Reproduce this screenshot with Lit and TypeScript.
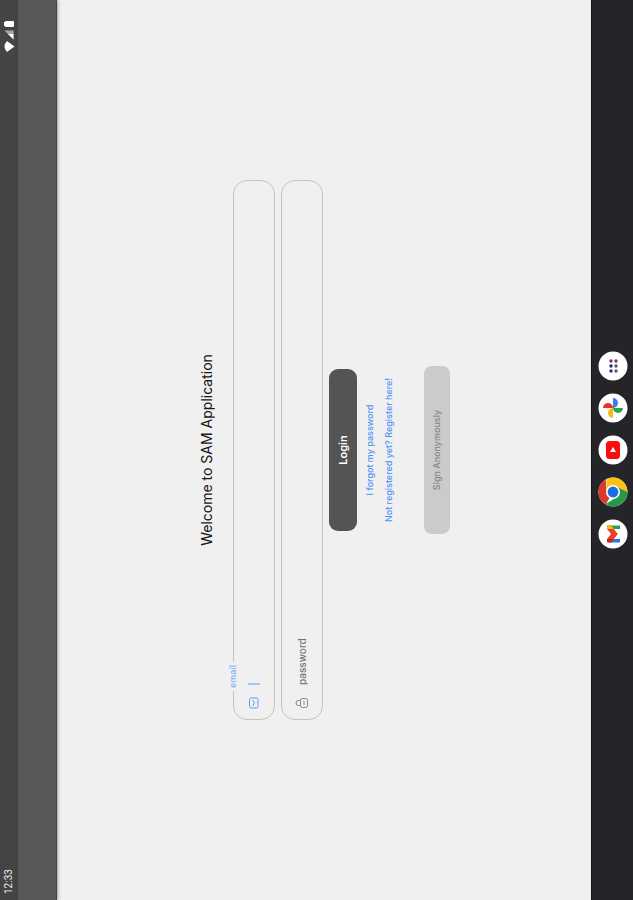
import { LitElement, html, css, svg } from "lit";
import { customElement } from "lit/decorators.js";

const photos = svg`
  <path d="M15 5A5 5 0 0 1 15 15Z" fill="#ea3325"/>
  <path d="M25 15A5 5 0 0 1 15 15Z" fill="#3b7ded"/>
  <path d="M15 25A5 5 0 0 1 15 15Z" fill="#28a446"/>
  <path d="M5 15A5 5 0 0 1 15 15Z" fill="#fbb917"/>`;

const gmail = svg`
  <path d="M8.300 12V22" stroke="#2a74e8" stroke-width="3.400"/>
  <path d="M21.700 12V22" stroke="#2ba04a" stroke-width="3.400"/>
  <path d="M6.600 9L10 9L15 13L20 9L23.400 9V13.200L15 19.800L6.600 13.200Z" fill="#e8402f"/>
  <path d="M20 9.200Q23.400 8 23.400 12V13.200L20 15.900Z" fill="#fbbc04"/>
  <path d="M10 9.200Q6.600 8 6.600 12V13.200L10 15.900Z" fill="#c5221f"/>`;

const chrome = svg`
  <path d="M15 15L2.440 7.750A14.500 14.500 0 0 1 27.560 7.750L15 8.500Z" fill="#dc3b2c"/>
  <path d="M15 8.500H27.900A14.500 14.500 0 0 1 15 29.500L20.600 18.250Z" fill="#fbc116"/>
  <path d="M9.400 18.250L2.700 7.300A14.500 14.500 0 0 0 15 29.500L20.600 18.250Z" fill="#279847"/>
  <circle cx="15" cy="15" r="7" fill="#fff"/>
  <circle cx="15" cy="15" r="5.400" fill="#1f6be0"/>`;

const youtube = svg`
  <rect x="6" y="8" width="18" height="14" rx="3.500" fill="#fb0d0d"/>
  <path d="M13 12L18 15L13 18Z" fill="#fff"/>`;

const drawer = svg`${[10, 15, 20].map((x) =>
  [13, 18].map(
    (y) => svg`<circle cx=${x} cy=${y} r="1.700" fill=${x === 20 ? "#7a3560" : y === 13 ? "#2b2a78" : "#4d5a78"} />`
  )
)}`;

const apps = [
  { name: "Gmail", art: gmail },
  { name: "Chrome", art: chrome },
  { name: "YouTube", art: youtube },
  { name: "Photos", art: photos },
  { name: "All apps", art: drawer },
];

@customElement("app-root")
export class AppRoot extends LitElement {
  static styles = css`
    :host {
      display: block;
      width: 100%;
      height: 100vh;
      overflow: hidden;
      font-family: Inter, "Open Sans", sans-serif;
    }
    * {
      box-sizing: border-box;
    }
    /* A landscape tablet turned a quarter to the left */
    .tablet {
      width: 100vh;
      height: 100vw;
      transform-origin: top left;
      transform: translateY(100vh) rotate(-90deg);
      display: flex;
      flex-direction: column;
      background: #f0f0f0;
    }
    .status {
      height: 18px;
      flex: none;
      display: flex;
      align-items: center;
      justify-content: space-between;
      padding: 0 18px 0 6px;
      background: #444;
      color: #eee;
      font: 10px/18px Roboto, sans-serif;
    }
    .status svg {
      display: block;
    }
    .appbar {
      height: 39px;
      flex: none;
      background: #585858;
      border-bottom: 1px solid #444;
      box-shadow: 0 1px 3px rgba(0, 0, 0, 0.35);
    }
    main {
      flex: 1;
      display: flex;
      flex-direction: column;
      align-items: center;
      padding-top: 140px;
    }
    h1 {
      margin: 0 0 16px;
      font-size: 14px;
      line-height: 20px;
      font-weight: 400;
      color: #161616;
    }
    form {
      width: 60%;
      display: flex;
      flex-direction: column;
      align-items: center;
    }
    .field {
      position: relative;
      width: 100%;
      height: 42px;
      margin-bottom: 6px;
      display: flex;
      align-items: center;
      gap: 12px;
      padding: 0 10px;
      border: 1px solid #c4c4c4;
      border-radius: 14px;
    }
    .field svg {
      flex: none;
      display: block;
    }
    .float {
      position: absolute;
      left: 28px;
      top: -7px;
      padding: 0 3px;
      background: #f0f0f0;
      color: #7fb0f6;
      font-size: 9px;
      line-height: 12px;
      font-weight: 500;
    }
    .caret {
      width: 2px;
      height: 12px;
      background: #a3c4f5;
    }
    input {
      flex: 1;
      min-width: 0;
      padding: 0;
      border: 0;
      outline: 0;
      background: none;
      font: 500 10px/16px Inter, sans-serif;
      color: #333;
    }
    input::placeholder {
      color: #777;
      opacity: 1;
    }
    .entry {
      flex: 1;
      display: flex;
      align-items: center;
    }
    button {
      padding: 0;
      border: 0;
      font: 500 9px/16px Inter, sans-serif;
    }
    .login {
      width: 30%;
      height: 28px;
      margin-bottom: 7px;
      border-radius: 9px;
      background: #545454;
      color: #fff;
      font-weight: 600;
      font-size: 11px;
    }
    a {
      color: #4a92f8;
      text-decoration: none;
      font-size: 9px;
      line-height: 12px;
      font-weight: 500;
      margin-bottom: 7px;
    }
    .anon {
      width: 31%;
      height: 26px;
      margin-top: 22px;
      border-radius: 8px;
      background: #cbcbcb;
      color: #858585;
    }
    nav {
      height: 42px;
      flex: none;
      display: flex;
      align-items: center;
      justify-content: center;
      gap: 12px;
      background: #242429;
      border-top: 1px solid #151518;
    }
    .app {
      width: 30px;
      height: 30px;
      background: none;
    }
    .app svg {
      display: block;
    }
  `;

  render() {
    return html`
      <div class="tablet">
        <header class="status">
          <time>12:33</time>
          <svg width="34" height="12" viewBox="0 0 34 12" aria-label="Wi-Fi, signal, battery">
            <path d="M0 4Q5.500 -1 11 4L5.500 11.500Z" fill="#fff" />
            <path d="M21.500 1.500V10.500H12.500Z" fill="#aaa" />
            <path d="M18 5V10.500H12.500Z" fill="#fff" />
            <path d="M25 3Q25 2 26 2V1H30V2Q31 2 31 3V10Q31 11 30 11H26Q25 11 25 10Z" fill="#fff" />
          </svg>
        </header>
        <div class="appbar"></div>
        <main>
          <h1>Welcome to SAM Application</h1>
          <form @submit=${(e: Event) => e.preventDefault()}>
            <div class="field">
              <label class="float" for="email">email</label>
              <svg width="12" height="12" viewBox="0 0 12 12" fill="none" stroke="#5c9bf5">
                <rect x="1" y="1.500" width="10" height="8.500" rx="1.500" />
                <path d="M3 4.500L6 6.500L9 4.500" />
              </svg>
              <div class="entry">
                <span class="caret"></span>
                <input id="email" type="email" />
              </div>
            </div>
            <div class="field">
              <svg width="12" height="14" viewBox="0 0 12 14" fill="none" stroke="#888">
                <path d="M3.500 5.500V3.500A2.500 2.500 0 0 1 8.500 3.500V5.500" />
                <rect x="1.500" y="5.500" width="9" height="7" rx="2" />
                <path d="M4 9H8" />
              </svg>
              <input id="password" type="password" placeholder="password" aria-label="password" />
            </div>
            <button class="login" type="submit">Login</button>
            <a href="#forgot">I forgot my password</a>
            <a href="#register">Not registered yet? Register here!</a>
            <button class="anon" type="button">Sign Anonymously</button>
          </form>
        </main>
        <nav>
          ${apps.map(
            (app) => html`<button class="app" aria-label=${app.name}>
              <svg width="30" height="30" viewBox="0 0 30 30" fill="none">
                <circle cx="15" cy="15" r="14.500" fill="#fff" />
                ${app.art}
              </svg>
            </button>`
          )}
        </nav>
      </div>
    `;
  }
}
